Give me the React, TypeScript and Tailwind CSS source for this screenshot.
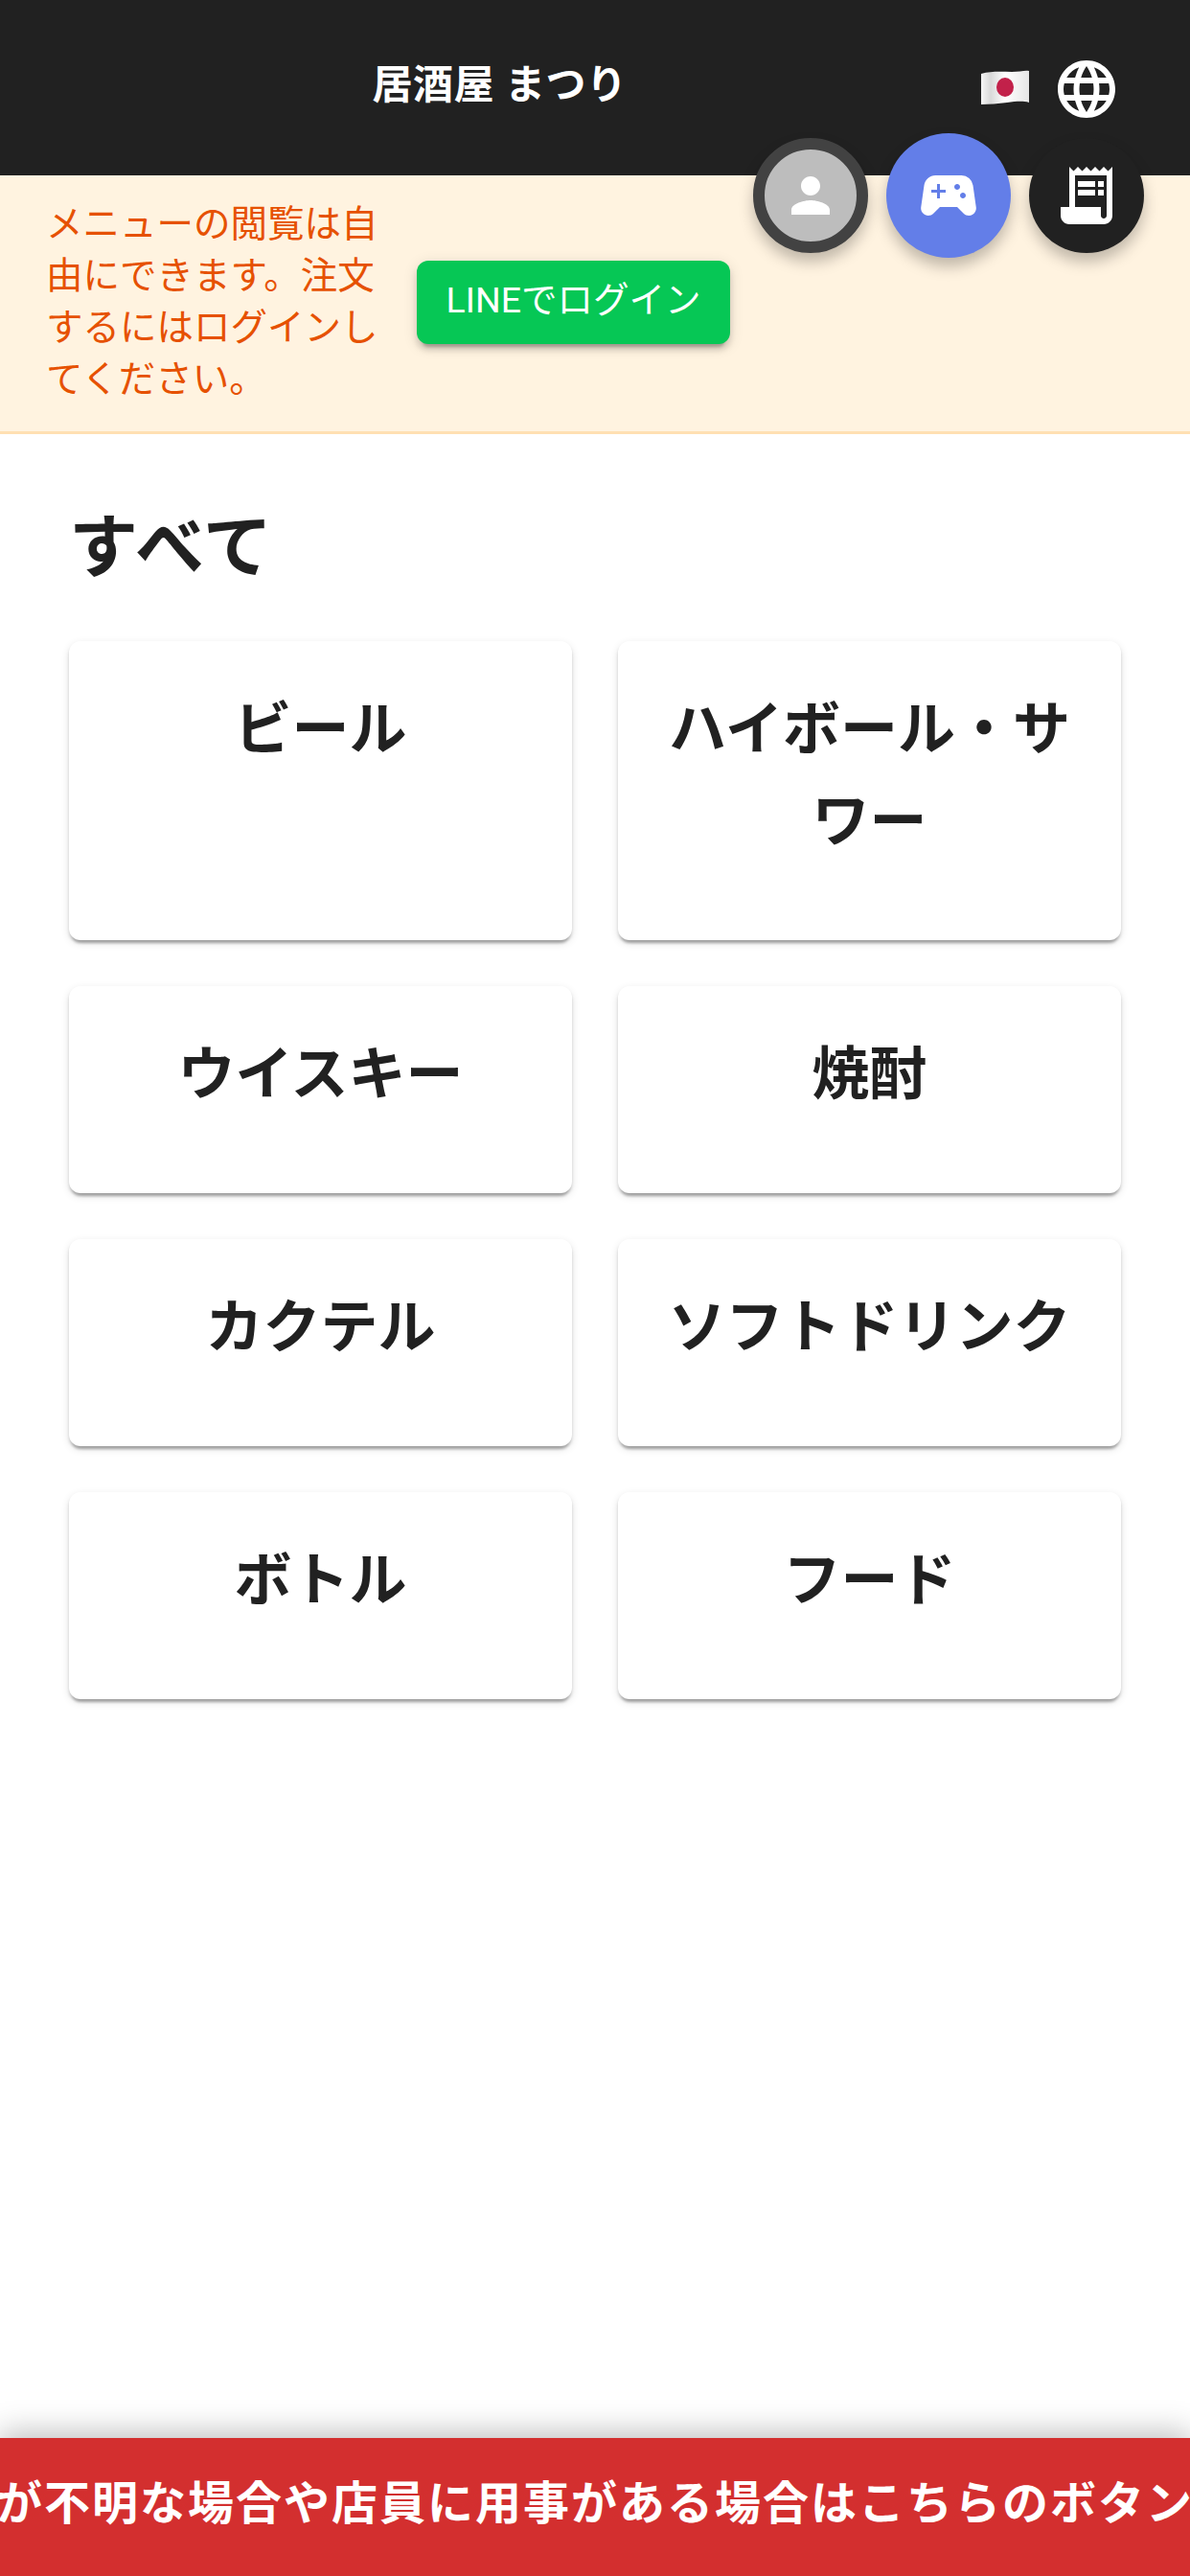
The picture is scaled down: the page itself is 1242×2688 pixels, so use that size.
import React from "react";
import { MdLanguage, MdPerson, MdReceiptLong, MdSportsEsports } from "react-icons/md";

const rows = [
  ["ビール", "ハイボール・サワー"],
  ["ウイスキー", "焼酎"],
  ["カクテル", "ソフトドリンク"],
  ["ボトル", "フード"],
];

const JapanFlag = () => (
  <svg width="52" height="38" viewBox="0 0 52 38">
    <defs>
      <linearGradient id="flagShade" x1="0" y1="0" x2="1" y2="0">
        <stop offset="0" stopColor="#f5f5f5" />
        <stop offset="0.2" stopColor="#d9d9d9" />
        <stop offset="0.5" stopColor="#ffffff" />
        <stop offset="1" stopColor="#e6e6e6" />
      </linearGradient>
    </defs>
    <path d="M1 5 C 12 2, 22 3, 33 3 C 41 3, 47 1, 51 2 L 51 35 C 44 33, 37 34, 28 35 C 19 36, 9 37, 1 37 Z" fill="url(#flagShade)" />
    <ellipse cx="26" cy="19" rx="9" ry="10" fill="#c2214a" />
  </svg>
);

export default function App() {
  return (
    <div className="relative flex h-[2688px] w-[1242px] flex-col overflow-hidden bg-white font-['Roboto','Noto_Sans_CJK_JP',sans-serif] text-[#212121]">
      {/* header */}
      <header className="relative flex h-[183px] shrink-0 items-center bg-[#212121] text-white">
        <div className="w-[1043px] pb-[6px] text-center text-[42px] font-bold leading-[60px] tracking-[0.5px]">居酒屋 まつり</div>
        <div className="absolute left-[1023px] top-[72px]">
          <JapanFlag />
        </div>
        <MdLanguage size={72} className="absolute left-[1098px] top-[57px]" />
      </header>

      {/* floating buttons */}
      <div className="absolute left-[786px] top-[144px] flex h-[120px] w-[120px] items-center justify-center rounded-full border-[12px] border-[#424242] bg-[#bdbdbd] text-white shadow-[0_9px_15px_rgba(0,0,0,0.25)]">
        <MdPerson size={60} />
      </div>
      <div className="absolute left-[925px] top-[139px] flex h-[130px] w-[130px] items-center justify-center rounded-full bg-[#637ee8] text-white shadow-[0_9px_15px_rgba(0,0,0,0.25)]">
        <MdSportsEsports size={72} />
      </div>
      <div className="absolute left-[1074px] top-[144px] flex h-[120px] w-[120px] items-center justify-center rounded-full bg-[#212121] text-white shadow-[0_9px_15px_rgba(0,0,0,0.25)]">
        <MdReceiptLong size={72} />
      </div>

      {/* login notice */}
      <div className="flex shrink-0 items-center border-b-[3px] border-[#ffe0b2] bg-[#fff3e0] pb-[27px] pl-[48px] pt-[24px]">
        <p className="w-[363px] text-[38.5px] leading-[54px] text-[#e65100]">メニューの閲覧は自由にできます。注文するにはログインしてください。</p>
        <button className="ml-[24px] h-[87px] w-[327px] rounded-[12px] bg-[#06c755] pb-[3px] text-center text-[37.5px] text-white shadow-[0_9px_3px_-6px_rgba(0,0,0,0.2),0_6px_6px_0_rgba(0,0,0,0.14),0_3px_15px_0_rgba(0,0,0,0.12)]">
          LINEでログイン
        </button>
      </div>

      {/* categories */}
      <main className="flex-1 px-[72px] pt-[68px]">
        <h2 className="mb-[46px] text-[72px] font-bold leading-[102px] tracking-[2px]">すべて</h2>
        <div className="grid grid-cols-2 gap-[48px]">
          {rows.flat().map((name) => (
            <div
              key={name}
              className="rounded-[12px] bg-white px-[48px] pb-[75px] pt-[45px] text-center text-[60px] font-bold leading-[96px] shadow-[0_6px_3px_-3px_rgba(0,0,0,0.2),0_3px_3px_0_rgba(0,0,0,0.14),0_3px_9px_0_rgba(0,0,0,0.12)]"
            >
              {name}
            </div>
          ))}
        </div>
      </main>

      {/* call staff marquee */}
      <footer className="flex h-[144px] shrink-0 items-center justify-center overflow-hidden bg-[#d32f2f] shadow-[0_-6px_30px_rgba(0,0,0,0.25)]">
        <span className="whitespace-nowrap pb-[6px] text-[48px] font-bold tracking-[2px] text-white">
          が不明な場合や店員に用事がある場合はこちらのボタン
        </span>
      </footer>
    </div>
  );
}
